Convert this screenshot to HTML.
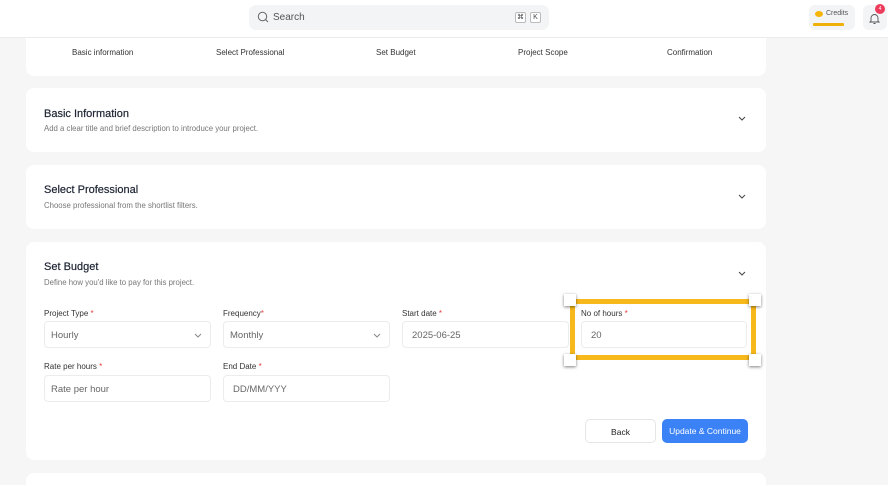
<!DOCTYPE html>
<html><head><meta charset="utf-8"><style>
*{box-sizing:border-box;margin:0;padding:0}
html,body{width:888px;height:485px;overflow:hidden}
body{background:#f6f6f7;font-family:"Liberation Sans",sans-serif;position:relative;color:#1f2937}
.hdr{position:absolute;left:0;top:0;width:888px;height:38px;background:#fff;border-bottom:1px solid #ececec;z-index:5}
.search{position:absolute;left:249px;top:5px;width:300px;height:25px;background:#f3f4f5;border-radius:7px}
.search span{position:absolute;left:24px;top:7px;font-size:10px;color:#555}
.key{position:absolute;top:7px;width:11px;height:11px;border:1px solid #bbb;border-radius:2px;font-size:7px;text-align:center;line-height:9px;color:#444;background:#fff}
.card{position:absolute;left:26px;width:740px;background:#fff;border-radius:8px}
.st{position:absolute;top:48px;font-size:8px;color:#333}
h3{position:absolute;left:18px;font-size:11px;font-weight:normal;color:#1e2433;-webkit-text-stroke:.2px #1e2433}
.sub{position:absolute;left:18px;font-size:7.8px;color:#777}
.chev{position:absolute;left:712px;width:8px;height:5px}
.lbl{position:absolute;font-size:8px;color:#333}
.lbl i{color:#e53e3e;font-style:normal}
.inp{position:absolute;width:167px;height:27px;border:1px solid #ececec;border-radius:4px;background:#fff;font-size:9.5px;color:#666;padding:8px 0 0 6px}
.btn{position:absolute;top:419px;height:24px;border-radius:5px;font-size:8.5px;text-align:center;line-height:24px}
.h{position:absolute;width:12px;height:12px;background:#fff;box-shadow:0 1px 3px rgba(0,0,0,.5);z-index:3}
</style></head><body>
<div class="hdr">
 <div class="search">
  <svg style="position:absolute;left:8px;top:6px" width="12" height="12" viewBox="0 0 12 12"><circle cx="5.5" cy="5.5" r="4.2" fill="none" stroke="#666" stroke-width="1"/><line x1="8.5" y1="8.5" x2="11" y2="11" stroke="#666"/></svg>
  <span>Search</span>
  <div class="key" style="left:266px">⌘</div><div class="key" style="left:281px">K</div>
 </div>
 <div style="position:absolute;left:809px;top:5px;width:46px;height:25px;background:#f3f4f5;border-radius:6px">
  <div style="position:absolute;left:6px;top:6px;width:8px;height:6px;border-radius:50%;background:#f5b50a"></div>
  <div style="position:absolute;left:17px;top:5px;font-size:7px;color:#555">Credits</div>
  <div style="position:absolute;left:4px;top:18px;width:31px;height:3px;background:#f0b00a;border-radius:1px"></div>
 </div>
 <div style="position:absolute;left:863px;top:5px;width:24px;height:25px;background:#f3f4f5;border-radius:6px">
  <svg style="position:absolute;left:6px;top:8px" width="11" height="12" viewBox="0 0 11 12"><path d="M2 8V5a3.5 3.5 0 0 1 7 0v3l1 1H1z M4.5 10.5h2" fill="none" stroke="#555" stroke-width=".9"/></svg>
  <div style="position:absolute;left:12px;top:-1px;width:10px;height:10px;border-radius:50%;background:#ee3b5b;color:#fff;font-size:5px;text-align:center;line-height:10px">4</div>
 </div>
</div>
<div class="card" style="top:20px;height:56px"></div>
<div class="st" style="left:72px">Basic information</div>
<div class="st" style="left:216px">Select Professional</div>
<div class="st" style="left:376px">Set Budget</div>
<div class="st" style="left:518px">Project Scope</div>
<div class="st" style="left:667px">Confirmation</div>

<div class="card" style="top:88px;height:64px"><h3 style="top:20px">Basic Information</h3><div class="sub" style="top:36px">Add a clear title and brief description to introduce your project.</div>
<svg class="chev" style="top:28px" viewBox="0 0 8 5"><path d="M1 1l3 3 3-3" fill="none" stroke="#444"/></svg></div>
<div class="card" style="top:165px;height:64px"><h3 style="top:19px">Select Professional</h3><div class="sub" style="top:36px">Choose professional from the shortlist filters.</div>
<svg class="chev" style="top:29px" viewBox="0 0 8 5"><path d="M1 1l3 3 3-3" fill="none" stroke="#444"/></svg></div>
<div class="card" style="top:242px;height:218px"><h3 style="top:19px">Set Budget</h3><div class="sub" style="top:36px">Define how you'd like to pay for this project.</div>
<svg class="chev" style="top:29px" viewBox="0 0 8 5"><path d="M1 1l3 3 3-3" fill="none" stroke="#444"/></svg></div>
<div class="card" style="top:473px;height:12px;border-radius:8px 8px 0 0"></div>

<div class="lbl" style="left:44px;top:309px">Project Type <i>*</i></div>
<div class="lbl" style="left:223px;top:309px">Frequency<i>*</i></div>
<div class="lbl" style="left:402px;top:309px">Start date <i>*</i></div>
<div class="lbl" style="left:581px;top:309px;z-index:4">No of hours <i>*</i></div>
<div class="inp" style="left:44px;top:321px">Hourly<svg style="position:absolute;right:8px;top:11px" width="8" height="5" viewBox="0 0 8 5"><path d="M1 1l3 3 3-3" fill="none" stroke="#888"/></svg></div>
<div class="inp" style="left:223px;top:321px">Monthly<svg style="position:absolute;right:8px;top:11px" width="8" height="5" viewBox="0 0 8 5"><path d="M1 1l3 3 3-3" fill="none" stroke="#888"/></svg></div>
<div class="inp" style="left:402px;top:321px;padding-left:9px">2025-06-25</div>
<div class="inp" style="left:581px;top:321px;width:166px;padding-left:9px;z-index:4">20</div>
<div class="lbl" style="left:44px;top:362px">Rate per hours <i>*</i></div>
<div class="lbl" style="left:223px;top:362px">End Date <i>*</i></div>
<div class="inp" style="left:44px;top:375px">Rate per hour</div>
<div class="inp" style="left:223px;top:375px;padding-left:9px">DD/MM/YYY</div>
<div class="btn" style="left:585px;width:71px;border:1px solid #e5e5e5;background:#fff;color:#222">Back</div>
<div class="btn" style="left:662px;width:86px;background:#3b82f6;color:#fff">Update &amp; Continue</div>

<div style="position:absolute;left:570px;top:299px;width:186px;height:61px;border:5px solid #f7b81c;z-index:2"></div>
<div class="h" style="left:564px;top:294px"></div><div class="h" style="left:749px;top:294px"></div>
<div class="h" style="left:564px;top:354px"></div><div class="h" style="left:749px;top:354px"></div>
</body></html>
